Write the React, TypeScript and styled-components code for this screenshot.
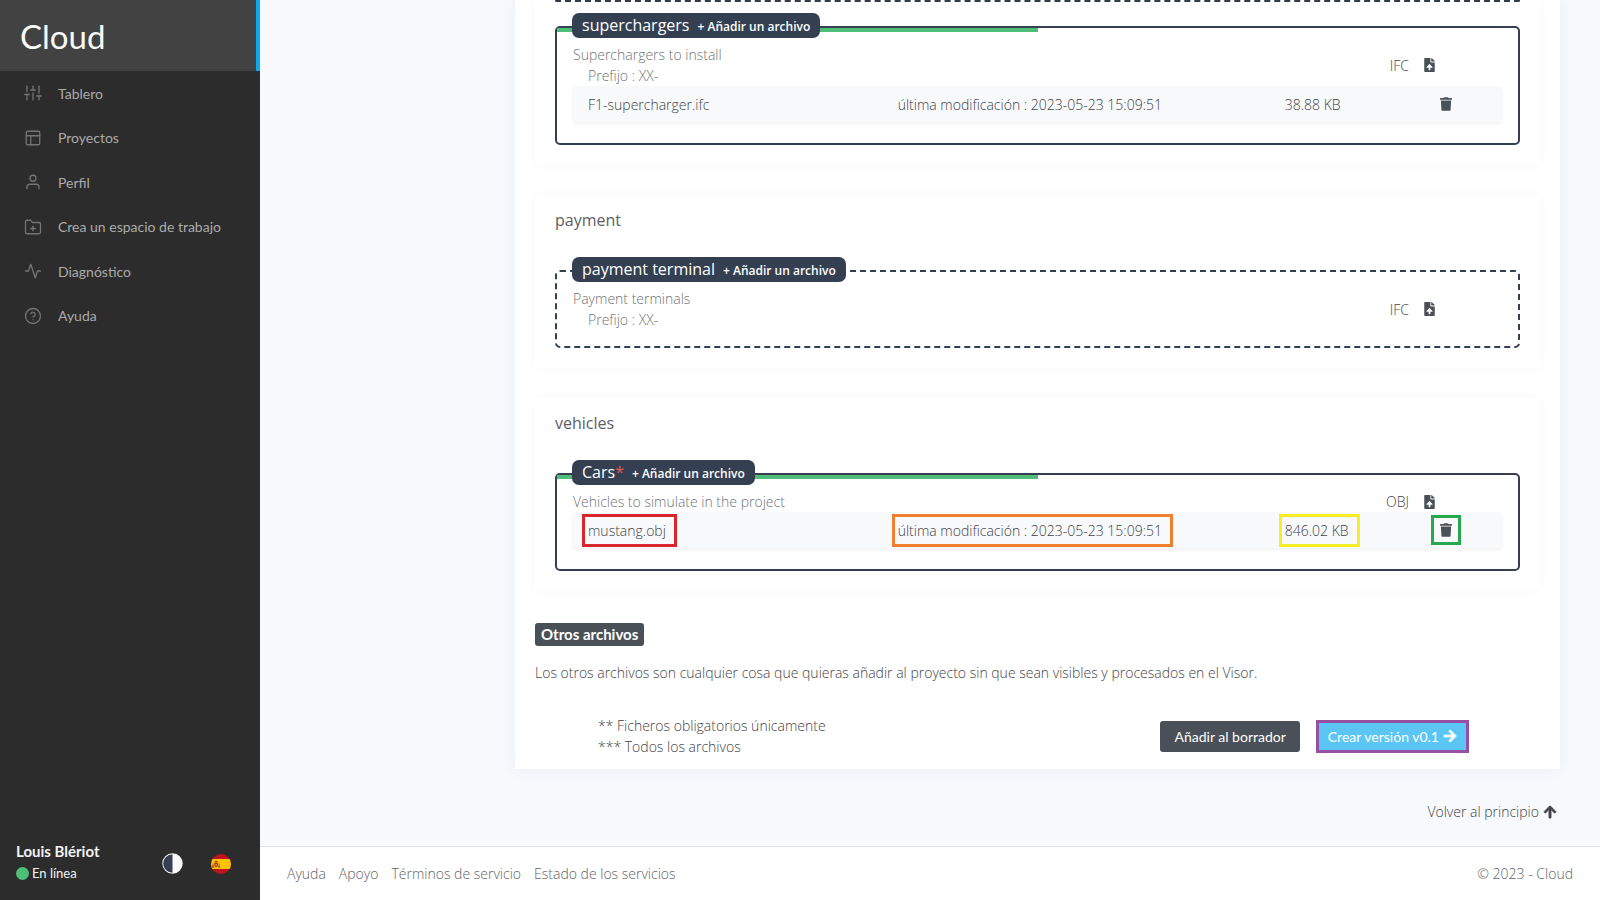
import React from 'react';
import styled, { createGlobalStyle, css } from 'styled-components';
import { FiSliders, FiLayout, FiUser, FiFolderPlus, FiActivity, FiHelpCircle } from 'react-icons/fi';
import { FaFileUpload, FaTrash, FaArrowRight, FaArrowUp } from 'react-icons/fa';

const navy = '#343f52';
const slate = '#495057';
const lato = 'Lato, "Liberation Sans", sans-serif';

const GlobalStyle = createGlobalStyle`
  *, *::before, *::after { box-sizing: border-box; }
  body {
    margin: 0;
    background: #f7f9fd;
    color: #3f4347;
    font-family: "Open Sans", "Liberation Sans", sans-serif;
    font-size: 14px;
    font-weight: 300;
    line-height: 21px;
  }
  h1, h2, h3, p { margin: 0; }
  a { color: inherit; text-decoration: none; }
  button { font: inherit; cursor: pointer; }
`;

const Shell = styled.div`
  display: flex;
  min-height: 100vh;
`;

const Sidebar = styled.aside`
  display: flex;
  flex: 0 0 260px;
  flex-direction: column;
  background: #2c2c2c;
  font-family: ${lato};
`;

const Brand = styled.header`
  display: flex;
  align-items: center;
  height: 71px;
  padding: 0 20px;
  background: #424242;
  border-right: 4px solid #0fa8e8;
`;

const BrandName = styled.h1`
  color: #fafafa;
  font-size: 33px;
  font-weight: 400;
  line-height: 40px;
`;

const Nav = styled.nav`
  display: grid;
  grid-auto-rows: 1fr;
  flex: 0 0 auto;
  min-height: 267px;
`;

const NavLink = styled.a`
  display: flex;
  align-items: center;
  gap: 16px;
  padding: 0 24px;
  color: #ababab;
  font-weight: 400;

  svg {
    width: 18px;
    height: 18px;
    color: #757575;
    stroke-width: 1.7;
  }
`;

const Account = styled.div`
  display: flex;
  align-items: center;
  margin-top: auto;
  padding: 0 29px 16px 16px;
`;

const Identity = styled.div`
  flex: 1;
  color: #f2f2f2;
  line-height: 22px;
`;

const UserName = styled.div`
  font-size: 15px;
  font-weight: 700;
`;

const Status = styled.div`
  display: flex;
  align-items: center;
  gap: 3px;
  font-size: 13px;
  font-weight: 400;

  &::before {
    content: '';
    width: 13px;
    height: 13px;
    border-radius: 50%;
    background: #4fbf78;
  }
`;

const RoundButton = styled.button`
  display: flex;
  padding: 0;
  margin: 3px 0 0 28px;
  border: 0;
  background: none;
`;

const Page = styled.div`
  display: flex;
  flex: 1;
  flex-direction: column;
  min-width: 0;
`;

const Content = styled.main`
  flex: 1;
  padding: 0 40px 0 255px;
`;

const Card = styled.div`
  padding: 0 20px 12px;
  background: #fff;
  box-shadow: 0 0 14px rgba(60, 90, 120, 0.08);
`;

const Section = styled.section<{ $cut?: boolean }>`
  padding: ${(p) => (p.$cut ? '0' : '15px')} 20px 20px;
  margin-bottom: 30px;
  background: #fff;
  box-shadow: 0 0 14px rgba(0, 0, 0, 0.03);
`;

const SectionTitle = styled.h2`
  margin-bottom: 39px;
  font-size: 16px;
  font-weight: 400;
  color: #5c6065;
`;

const CutBox = styled.div`
  margin-bottom: 24px;
  border: 2px dashed #343a4a;
  border-top: 0;
  border-radius: 0 0 4px 4px;
`;

const Box = styled.div<{ $filled: boolean }>`
  position: relative;
  padding: 16px;
  border: 2px ${(p) => (p.$filled ? 'solid' : 'dashed')} ${navy};
  border-radius: 5px;
`;

const Progress = styled.div`
  position: absolute;
  top: 0;
  left: 0;
  height: 4px;
  background: #50bd79;
`;

const BoxLabel = styled.div`
  position: absolute;
  top: -15px;
  left: 15px;
  display: flex;
  align-items: baseline;
  gap: 8px;
  height: 25px;
  padding: 0 10px;
  border-radius: 7px;
  background: ${navy};
  color: #fff;
  white-space: nowrap;
`;

const BoxName = styled.h3`
  font-size: 16px;
  font-weight: 400;
  line-height: 25px;
`;

const Required = styled.span`
  color: #e2574c;
`;

const AddButton = styled.button`
  padding: 0;
  border: 0;
  background: none;
  color: #fff;
  font-size: 12px;
  font-weight: 600;
`;

const BoxHead = styled.div`
  display: flex;
  align-items: center;
  justify-content: space-between;
  padding-right: 67px;
`;

const Description = styled.div`
  color: #6f7377;
`;

const Prefix = styled.p`
  padding-left: 15px;
`;

const Format = styled.div`
  display: flex;
  align-items: center;
  gap: 15px;
`;

const IconButton = styled.button<{ $width: number }>`
  display: flex;
  padding: 0;
  border: 0;
  background: none;
  color: ${slate};

  svg {
    width: ${(p) => p.$width}px;
    height: 14px;
  }
`;

const FileRow = styled.div`
  display: grid;
  grid-template-columns: 4fr 5fr 2fr 1fr;
  align-items: center;
  height: 36px;
  margin-bottom: 5px;
  border-radius: 4px;
  background: #f8f9fb;
  box-shadow: 0 2px 4px rgba(0, 0, 0, 0.06);
`;

const Cell = styled.div`
  display: flex;
  padding-left: 15px;
  white-space: nowrap;
`;

const Mark = styled.div<{ $color?: string; $icon?: boolean }>`
  ${(p) =>
    p.$color &&
    css`
      padding: ${p.$icon ? '5px 6px' : '3px 8px 3px 3px'};
      margin-left: ${p.$icon ? '-9px' : '-6px'};
      border: 3px solid ${p.$color};
    `}
`;

const Tag = styled.h2`
  width: fit-content;
  margin: 32px 0 16px;
  padding: 0 6px;
  border-radius: 3px;
  background: ${slate};
  color: #fff;
  font-family: ${lato};
  font-size: 15px;
  font-weight: 700;
  line-height: 23px;
`;

const Actions = styled.div`
  display: flex;
  align-items: center;
  justify-content: space-between;
  padding: 32px 71px 0 63px;
`;

const Buttons = styled.div`
  display: flex;
  align-items: center;
  gap: 16px;
`;

const arrow = css`
  svg {
    width: 14px;
    height: 14px;
    stroke: currentColor;
    stroke-width: 24;
  }
`;

const Button = styled.button<{ $primary?: boolean }>`
  display: flex;
  align-items: center;
  gap: 4px;
  height: ${(p) => (p.$primary ? '33px' : '31px')};
  padding: ${(p) => (p.$primary ? '0 9px' : '0 14px')};
  border: ${(p) => (p.$primary ? '3px solid #954fa3' : '0')};
  border-radius: ${(p) => (p.$primary ? '0' : '3px')};
  background: ${(p) => (p.$primary ? '#5bc6f4' : slate)};
  color: #fff;
  font-family: ${lato};
  font-weight: 400;
  ${arrow}
`;

const BackToTop = styled.a`
  display: flex;
  align-items: center;
  justify-content: flex-end;
  gap: 4px;
  padding: 32px 3px 24px;
  ${arrow}
`;

const Footer = styled.footer`
  display: flex;
  justify-content: space-between;
  padding: 16px 27px;
  border-top: 1px solid #e1e3e6;
  background: #fff;
  color: #5f6367;
`;

const FooterLinks = styled.nav`
  display: flex;
  gap: 13px;
`;

const navItems = [
  { label: 'Tablero', Icon: FiSliders },
  { label: 'Proyectos', Icon: FiLayout },
  { label: 'Perfil', Icon: FiUser },
  { label: 'Crea un espacio de trabajo', Icon: FiFolderPlus },
  { label: 'Diagnóstico', Icon: FiActivity },
  { label: 'Ayuda', Icon: FiHelpCircle },
];

interface FileInfo {
  name: string;
  modified: string;
  size: string;
  marked?: boolean;
}

interface ModuleProps {
  name: string;
  description: string;
  format: string;
  prefix?: string;
  required?: boolean;
  progress?: number;
  file?: FileInfo;
}

const ContrastIcon = () => (
  <svg width="21" height="21" viewBox="0 0 21 21" aria-hidden="true">
    <circle cx="10.5" cy="10.5" r="9.5" fill="#f8f9fb" stroke="#f8f9fb" strokeWidth="1.4" />
    <path d="M10.5 1.2a9.3 9.3 0 0 0 0 18.6z" fill="#343f52" />
  </svg>
);

const SpainFlag = () => (
  <svg width="20" height="20" viewBox="0 0 20 20" aria-hidden="true">
    <clipPath id="round"><circle cx="10" cy="10" r="10" /></clipPath>
    <g clipPath="url(#round)">
      <rect width="20" height="20" fill="#c1121f" />
      <rect y="5" width="20" height="10" fill="#ffc400" />
      <path d="M1.6 9.6h1v3.4h-1zM7.6 9.6h1v3.4h-1z" fill="#8f5a3c" />
      <path d="M3.4 9h3.4v2.6a1.7 1.7 0 0 1-3.4 0z" fill="#b5302a" />
      <path d="M3.6 7l.8.5.7-.9.7.9.8-.5v1.5h-3z" fill="#8c2f14" />
      <path d="M1 12.6h2v.8h-2zM7.2 12.6h2v.8h-2z" fill="#a03020" />
      <circle cx="5.1" cy="11" r=".8" fill="#e8c9b0" />
    </g>
  </svg>
);

function Module({ name, description, format, prefix, required, progress, file }: ModuleProps) {
  const mark = (color: string) => (file?.marked ? color : undefined);
  return (
    <Box $filled={!!file}>
      {progress !== undefined && <Progress style={{ width: `${progress}%` }} />}
      <BoxLabel>
        <BoxName>{name}{required && <Required>*</Required>}</BoxName>
        <AddButton type="button">+ Añadir un archivo</AddButton>
      </BoxLabel>
      <BoxHead>
        <Description>
          <p>{description}</p>
          {prefix && <Prefix>Prefijo : {prefix}</Prefix>}
        </Description>
        <Format>
          {format}
          <IconButton type="button" $width={11} aria-label="Subir archivo"><FaFileUpload /></IconButton>
        </Format>
      </BoxHead>
      {file && (
        <FileRow>
          <Cell><Mark $color={mark('#d9252b')}>{file.name}</Mark></Cell>
          <Cell><Mark $color={mark('#f08030')}>última modificación : {file.modified}</Mark></Cell>
          <Cell><Mark $color={mark('#f9ed25')}>{file.size}</Mark></Cell>
          <Cell>
            <Mark $color={mark('#27a84f')} $icon>
              <IconButton type="button" $width={12} aria-label="Eliminar"><FaTrash /></IconButton>
            </Mark>
          </Cell>
        </FileRow>
      )}
    </Box>
  );
}

export default function App() {
  return (
    <>
      <GlobalStyle />
      <Shell>
        <Sidebar>
          <Brand><BrandName>Cloud</BrandName></Brand>
          <Nav>
            {navItems.map(({ label, Icon }) => (
              <NavLink key={label} href="#"><Icon />{label}</NavLink>
            ))}
          </Nav>
          <Account>
            <Identity>
              <UserName>Louis Blériot</UserName>
              <Status>En línea</Status>
            </Identity>
            <RoundButton type="button" aria-label="Contraste"><ContrastIcon /></RoundButton>
            <RoundButton type="button" aria-label="Idioma"><SpainFlag /></RoundButton>
          </Account>
        </Sidebar>
        <Page>
          <Content>
            <Card>
              <Section $cut>
                <CutBox />
                <Module
                  name="superchargers"
                  description="Superchargers to install"
                  prefix="XX-"
                  format="IFC"
                  progress={50}
                  file={{ name: 'F1-supercharger.ifc', modified: '2023-05-23 15:09:51', size: '38.88 KB' }}
                />
              </Section>
              <Section>
                <SectionTitle>payment</SectionTitle>
                <Module name="payment terminal" description="Payment terminals" prefix="XX-" format="IFC" />
              </Section>
              <Section>
                <SectionTitle>vehicles</SectionTitle>
                <Module
                  name="Cars"
                  required
                  description="Vehicles to simulate in the project"
                  format="OBJ"
                  progress={50}
                  file={{ name: 'mustang.obj', modified: '2023-05-23 15:09:51', size: '846.02 KB', marked: true }}
                />
              </Section>
              <Tag>Otros archivos</Tag>
              <p>Los otros archivos son cualquier cosa que quieras añadir al proyecto sin que sean visibles y procesados en el Visor.</p>
              <Actions>
                <div>
                  <p>** Ficheros obligatorios únicamente</p>
                  <p>*** Todos los archivos</p>
                </div>
                <Buttons>
                  <Button type="button">Añadir al borrador</Button>
                  <Button type="button" $primary>Crear versión v0.1 <FaArrowRight /></Button>
                </Buttons>
              </Actions>
            </Card>
            <BackToTop href="#">Volver al principio <FaArrowUp /></BackToTop>
          </Content>
          <Footer>
            <FooterLinks>
              <a href="#">Ayuda</a>
              <a href="#">Apoyo</a>
              <a href="#">Términos de servicio</a>
              <a href="#">Estado de los servicios</a>
            </FooterLinks>
            <span>© 2023 - Cloud</span>
          </Footer>
        </Page>
      </Shell>
    </>
  );
}
